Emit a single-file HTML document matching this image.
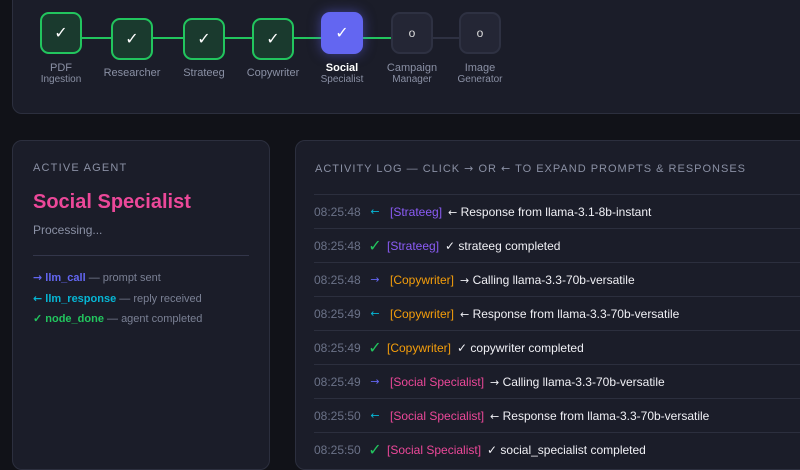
<!DOCTYPE html>
<html><head><meta charset="utf-8"><style>
*{margin:0;padding:0;box-sizing:border-box}
body{width:800px;height:450px;overflow:hidden;background:#111218;font-family:"Liberation Sans",sans-serif;position:relative}
.panel{position:absolute;background:#1b1d29;border:1px solid #2c2f3e;border-radius:10px}
.node{position:absolute;width:42px;height:42px;border-radius:9px;display:flex;align-items:center;justify-content:center;color:#fff;font-size:16px}
.done{background:#1a3a2e;border:2px solid #22c55e}
.act{background:#6366f1;box-shadow:0 0 12px rgba(99,102,241,.5)}
.pend{background:#242635;border:2px solid #2e3142;font-size:12px;color:#ddd}
.line{position:absolute;height:2px;top:37px;background:#22c55e}
.lbl{position:absolute;width:90px;text-align:center;color:#8a90a4;font-size:11px;line-height:12px}
.lbl small{font-size:10px;display:block}
.row{position:absolute;left:314px;width:486px;height:34px;border-top:1px solid #2c2f3e;font-size:12px;display:flex;align-items:center;white-space:nowrap}
.t{color:#6b7288;width:50px}
.ic{width:22px;text-align:center;font-size:14px}
.m{color:#f0f0f5}
.a{font-family:"DejaVu Sans",sans-serif;font-size:11px}
</style></head><body>
<div class="panel" style="left:12px;top:-12px;width:800px;height:126px"></div>
<div class="line" style="left:81px;width:30px"></div>
<div class="line" style="left:153px;width:30px"></div>
<div class="line" style="left:225px;width:27px"></div>
<div class="line" style="left:294px;width:27px"></div>
<div class="line" style="left:363px;width:28px"></div>
<div class="line" style="left:432px;width:27px;background:#2e3142"></div>
<div class="node done" style="left:40px;top:12px">✓</div>
<div class="node done" style="left:111px;top:18px">✓</div>
<div class="node done" style="left:183px;top:18px">✓</div>
<div class="node done" style="left:252px;top:18px">✓</div>
<div class="node act" style="left:321px;top:12px">✓</div>
<div class="node pend" style="left:391px;top:12px">o</div>
<div class="node pend" style="left:459px;top:12px">o</div>
<div class="lbl" style="left:16px;top:62px">PDF<small>Ingestion</small></div>
<div class="lbl" style="left:87px;top:67px">Researcher</div>
<div class="lbl" style="left:159px;top:67px">Strateeg</div>
<div class="lbl" style="left:228px;top:67px">Copywriter</div>
<div class="lbl" style="left:297px;top:62px;color:#fff;font-weight:bold">Social<small style="font-weight:normal;color:#8a90a4">Specialist</small></div>
<div class="lbl" style="left:367px;top:62px">Campaign<small>Manager</small></div>
<div class="lbl" style="left:435px;top:62px">Image<small>Generator</small></div>

<div class="panel" style="left:12px;top:140px;width:258px;height:330px"></div>
<div style="position:absolute;left:33px;top:162px;font-size:11px;letter-spacing:1.2px;color:#8a90a4">ACTIVE AGENT</div>
<div style="position:absolute;left:33px;top:191px;font-size:20px;font-weight:bold;color:#ec4899">Social Specialist</div>
<div style="position:absolute;left:33px;top:223px;font-size:12px;color:#8a90a4">Processing...</div>
<div style="position:absolute;left:33px;top:255px;width:216px;height:1px;background:#33364a"></div>
<div style="position:absolute;left:33px;top:268px;font-size:11px;color:#7a8094;line-height:20.5px">
<div><span style="color:#6366f1;font-weight:bold"><span class="a">→</span> llm_call</span> — prompt sent</div>
<div><span style="color:#06b6d4;font-weight:bold"><span class="a">←</span> llm_response</span> — reply received</div>
<div><span style="color:#22c55e;font-weight:bold">✓ node_done</span> — agent completed</div>
</div>

<div class="panel" style="left:295px;top:140px;width:520px;height:330px"></div>
<div style="position:absolute;left:315px;top:162px;font-size:11px;letter-spacing:1px;color:#8a90a4;white-space:nowrap">ACTIVITY LOG — CLICK <span class="a">→</span> OR <span class="a">←</span> TO EXPAND PROMPTS &amp; RESPONSES</div>
<div class="row" style="top:194px"><span class="t">08:25:48</span><span class="ic a" style="color:#06b6d4">←</span><span style="color:#8b5cf6;margin:0 6px 0 4px">[Strateeg]</span><span class="m"><span class="a">←</span> Response from llama-3.1-8b-instant</span></div>
<div class="row" style="top:228px"><span class="t">08:25:48</span><span class="ic" style="color:#22c55e;font-size:16px">✓</span><span style="color:#8b5cf6;margin:0 6px 0 1px">[Strateeg]</span><span class="m">✓ strateeg completed</span></div>
<div class="row" style="top:262px"><span class="t">08:25:48</span><span class="ic a" style="color:#6366f1">→</span><span style="color:#f59e0b;margin:0 6px 0 4px">[Copywriter]</span><span class="m"><span class="a">→</span> Calling llama-3.3-70b-versatile</span></div>
<div class="row" style="top:296px"><span class="t">08:25:49</span><span class="ic a" style="color:#06b6d4">←</span><span style="color:#f59e0b;margin:0 6px 0 4px">[Copywriter]</span><span class="m"><span class="a">←</span> Response from llama-3.3-70b-versatile</span></div>
<div class="row" style="top:330px"><span class="t">08:25:49</span><span class="ic" style="color:#22c55e;font-size:16px">✓</span><span style="color:#f59e0b;margin:0 6px 0 1px">[Copywriter]</span><span class="m">✓ copywriter completed</span></div>
<div class="row" style="top:364px"><span class="t">08:25:49</span><span class="ic a" style="color:#6366f1">→</span><span style="color:#ec4899;margin:0 6px 0 4px">[Social Specialist]</span><span class="m"><span class="a">→</span> Calling llama-3.3-70b-versatile</span></div>
<div class="row" style="top:398px"><span class="t">08:25:50</span><span class="ic a" style="color:#06b6d4">←</span><span style="color:#ec4899;margin:0 6px 0 4px">[Social Specialist]</span><span class="m"><span class="a">←</span> Response from llama-3.3-70b-versatile</span></div>
<div class="row" style="top:432px"><span class="t">08:25:50</span><span class="ic" style="color:#22c55e;font-size:16px">✓</span><span style="color:#ec4899;margin:0 6px 0 1px">[Social Specialist]</span><span class="m">✓ social_specialist completed</span></div>
</body></html>
